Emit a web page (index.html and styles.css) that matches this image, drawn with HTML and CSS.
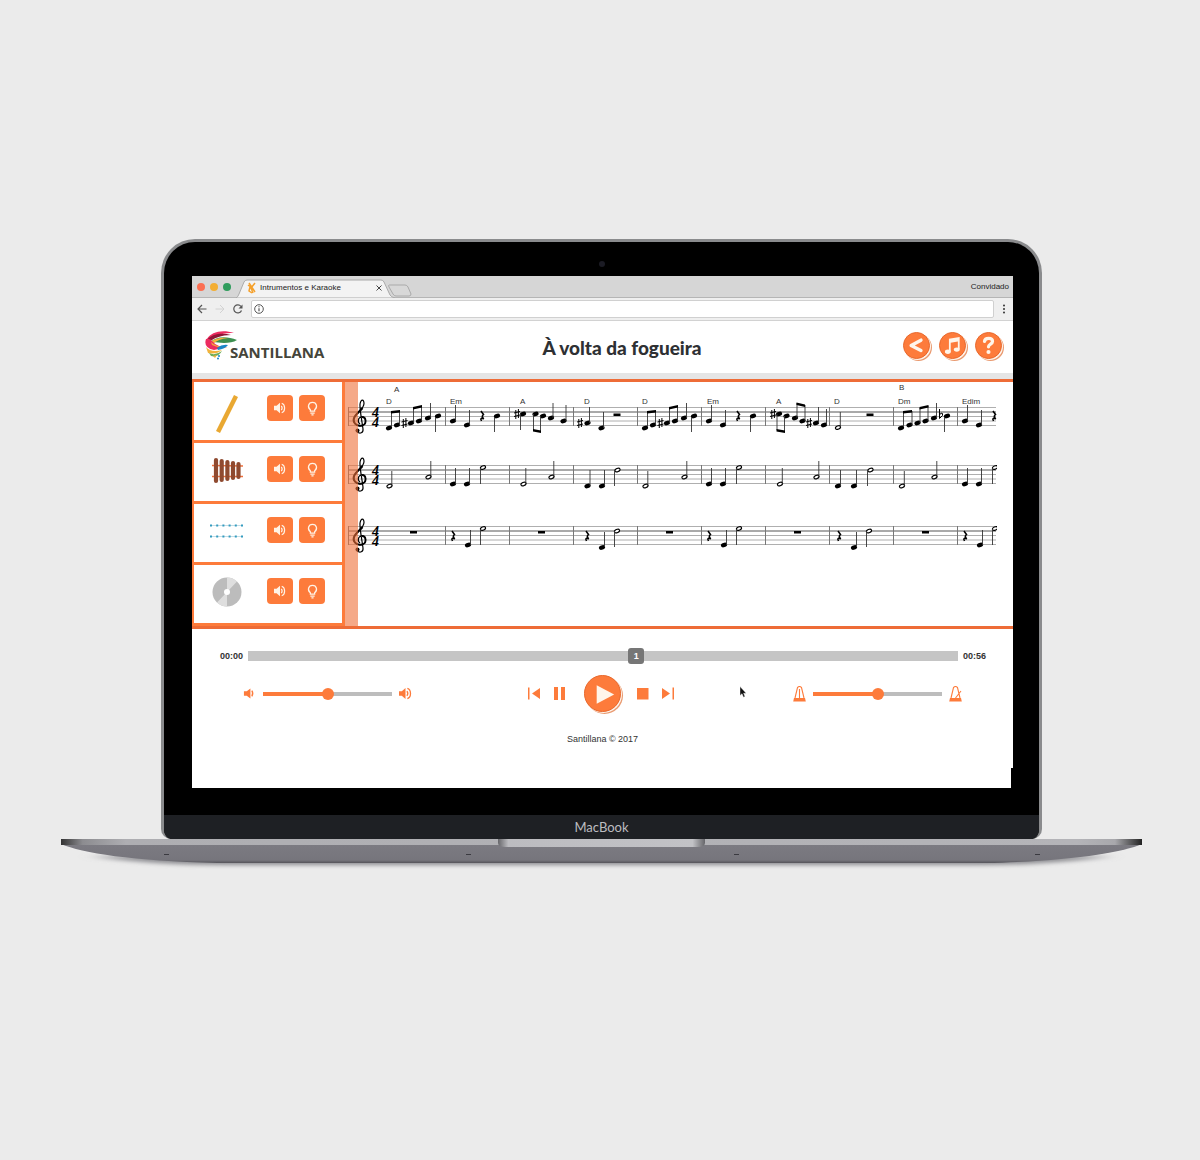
FILE: index.html
```html
<!DOCTYPE html>
<html lang="pt">
<head>
<meta charset="utf-8">
<title>Intrumentos e Karaoke</title>
<link rel="stylesheet" href="styles.css">
</head>
<body>
<svg class="defs" width="0" height="0" aria-hidden="true">
  <defs>
    <symbol id="speaker" viewBox="0 0 14 14">
      <path d="M0 4.500h3L7 1v12L3 9.500H0z"/>
      <path d="M8.500 4.500q2 2.500 0 5M9 1.500c4.500 1.500 4.500 9.500 0 11" fill="none" stroke="currentColor" stroke-width="1.400"/>
    </symbol>
    <symbol id="speaker-low" viewBox="0 0 14 14">
      <path d="M1 4.500h3L8 1.500v11L4 9.500H1z"/>
      <path d="M9.500 4q2 3 0 6" fill="none" stroke="currentColor" stroke-width="1.400"/>
    </symbol>
    <symbol id="bulb" viewBox="0 0 14 14">
      <path d="M5 9.500V8.200C2 6 3 1.200 7 1.200S12 6 9 8.200v1.300zM5 11.300h4M6 13h2" fill="none" stroke="currentColor" stroke-width="1.200"/>
    </symbol>
  </defs>
</svg>

<main class="stage">
  <div class="laptop">
    <div class="lid">
      <span class="camera"></span>
      <div class="screen">
        <div class="tabs">
          <span class="dot red"></span><span class="dot yellow"></span><span class="dot green"></span>
          <div class="tab">
            <svg class="tab-shape" viewBox="0 0 176 20" preserveAspectRatio="none" aria-hidden="true">
              <path d="M0 20Q2 19 3 16L8 4Q9 2 11 2H145Q147 2 148 4L154 17Q155 19 159 20z" fill="#f3f3f3" stroke="#aaa"/>
              <path d="M153 7h16q2 0 3 2l3 7q0 2-2 2h-13q-2 0-3-2l-4-7q-1-2 0-2z" fill="#d8d8d8" stroke="#aaa"/>
            </svg>
            <svg class="favicon" viewBox="0 0 10 12" aria-hidden="true"><path d="M2 1l6 9M8 1L4 6l2 5M3 5l-1 4 3 2M1 3l4 3" fill="none" stroke="#f5a12c" stroke-width="1.500"/></svg>
            <span class="tab-name">Intrumentos e Karaoke</span>
            <button class="plain close" aria-label="Fechar"><svg viewBox="0 0 6 6" width="6" height="6"><path d="M.5.5l5 5m0-5l-5 5" stroke="#444"/></svg></button>
          </div>
          <span class="guest">Convidado</span>
        </div>
        <div class="toolbar">
          <button class="plain" aria-label="Voltar"><svg viewBox="0 0 10 10" width="10" height="10"><path d="M9.500 5H1M5 1L1 5l4 4" fill="none" stroke="#555" stroke-width="1.200"/></svg></button>
          <button class="plain" aria-label="Avançar"><svg viewBox="0 0 10 10" width="10" height="10"><path d="M.5 5H9M5 1l4 4-4 4" fill="none" stroke="#d2d2d2"/></svg></button>
          <button class="plain" aria-label="Recarregar"><svg viewBox="0 0 10 10" width="10" height="10"><path d="M8.500 6.500A4 4 0 1 1 8 2.500" fill="none" stroke="#555" stroke-width="1.200"/><path d="M9.500.5v4h-4z" fill="#555"/></svg></button>
          <div class="address">
            <svg viewBox="0 0 10 10" width="10" height="10" aria-hidden="true"><circle cx="5" cy="5" r="4.300" fill="none" stroke="#555"/><path d="M5 4.300v3M5 2.300v1" stroke="#555" stroke-width="1.200"/></svg>
            <input type="text" aria-label="Endereço">
          </div>
          <button class="plain" aria-label="Menu"><svg viewBox="0 0 4 10" width="4" height="10"><circle cx="2" cy="1.500" r="1"/><circle cx="2" cy="5" r="1"/><circle cx="2" cy="8.500" r="1"/></svg></button>
        </div>

        <header class="header">
          <a class="logo" href="#">
            <svg viewBox="0 0 34 30" width="34" height="30" aria-hidden="true">
              <path d="M2 9C6 2 17-1 29 3 20 3 10 4 2 11z" fill="#ec2b5f"/>
              <path d="M2 10C8 3 18 3 26 5 17 5 8 8 3 13z" fill="#8d1735"/>
              <path d="M5 12C12 6 22 6 32 10 26 14 15 13 8 12z" fill="#3d8f50"/>
              <path d="M3 13Q12 7 23 8 13 9 8 14z" fill="#f2b33d"/>
              <path d="M1 9Q-2 18 9 20l13-3Q12 17 8 12 5 8 1 9z" fill="#ec2b5f"/>
              <path d="M6 12q6 6 17 5-8 2-16-2z" fill="#f2a33d"/>
              <path d="M12 18q5-4 11-3-3 4-10 5z" fill="#1a86c8"/>
              <path d="M1 17q5 6 16 3-6 5-14 3z" fill="#f2b33d"/>
              <path d="M4 23q6 3 13-2-4 7-11 5z" fill="#6fae5a"/>
              <path d="M8 26l4-1-2 3z" fill="#f2b33d"/>
              <circle cx="14" cy="26" r="1" fill="#1a86c8"/><circle cx="13" cy="28.500" r="1" fill="#1a86c8"/>
            </svg>
            <span class="brand">SANTILLANA</span>
          </a>
          <h1 class="title">À volta da fogueira</h1>
          <nav class="actions">
            <button class="round" aria-label="Anterior"><svg viewBox="0 0 28 28"><path d="M19 8L8 14l11 5.500" fill="none" stroke="currentColor" stroke-width="3.800" stroke-linecap="round" stroke-linejoin="round"/></svg></button>
            <button class="round" aria-label="Música"><svg viewBox="0 0 28 28"><path d="M10 6.500L22 4.500V18h-2V9.500l-8 1.400V21h-2z"/><ellipse cx="8.800" cy="21" rx="3.300" ry="2.400"/><ellipse cx="18.800" cy="18.500" rx="3.300" ry="2.400"/></svg></button>
            <button class="round" aria-label="Ajuda"><svg viewBox="0 0 28 28"><path d="M9.500 9.500C10 5 18.500 5 18.500 9.500c0 3-4.500 3-4.500 6" fill="none" stroke="currentColor" stroke-width="3.600" stroke-linecap="round"/><circle cx="14" cy="21.300" r="2.300"/></svg></button>
          </nav>
        </header>

        <section class="workspace">
          <div class="instruments">
            <div class="instrument">
              <svg viewBox="0 0 46 58" width="46" height="58" aria-hidden="true"><path d="M14 50L32 14" stroke="#e9a832" stroke-width="4.500"/></svg>
              <div class="pair">
                <button class="square" aria-label="Som da flauta"><svg><use href="#speaker"/></svg></button>
                <button class="square hint" aria-label="Dica da flauta"><svg><use href="#bulb"/></svg></button>
              </div>
            </div>
            <div class="instrument">
              <svg viewBox="0 0 46 58" width="46" height="58" aria-hidden="true"><path d="M8 22.500l31 .5M8 33.500h31" stroke="#f0703c" stroke-width="1.500"/><path d="M12 17v21M17.700 18v19M23.400 19v17M29 20v15M34.500 21v13" stroke="#8f4a30" stroke-width="4.200" stroke-linecap="round"/></svg>
              <div class="pair">
                <button class="square" aria-label="Som do xilofone"><svg><use href="#speaker"/></svg></button>
                <button class="square hint" aria-label="Dica do xilofone"><svg><use href="#bulb"/></svg></button>
              </div>
            </div>
            <div class="instrument">
              <svg viewBox="0 0 46 58" width="46" height="58" aria-hidden="true"><path d="M6 21.500h33M6 32.500h33" stroke="#c3dde5"/><path d="M6 21.500h33M6 32.500h33" stroke="#359cc0" stroke-width="2" stroke-dasharray="2 4.200"/></svg>
              <div class="pair">
                <button class="square" aria-label="Som do metalofone"><svg><use href="#speaker"/></svg></button>
                <button class="square hint" aria-label="Dica do metalofone"><svg><use href="#bulb"/></svg></button>
              </div>
            </div>
            <div class="instrument">
              <svg viewBox="0 0 46 58" width="46" height="58" aria-hidden="true"><circle cx="23" cy="27" r="14.500" fill="#bcbcbc"/><path d="M23 27V12.500a14.500 14.500 0 0 1 10 4zM23 27v14.500a14.500 14.500 0 0 1-10-4z" fill="#dedede"/><circle cx="23" cy="27" r="3" fill="#fff"/></svg>
              <div class="pair">
                <button class="square" aria-label="Som do acompanhamento"><svg><use href="#speaker"/></svg></button>
                <button class="square hint" aria-label="Dica do acompanhamento"><svg><use href="#bulb"/></svg></button>
              </div>
            </div>
          </div>

          <svg class="score" viewBox="345 382 668 244" preserveAspectRatio="xMinYMin meet" role="img" aria-label="Partitura">
            <defs>
              <ellipse id="q" rx="3.200" ry="2.200" transform="rotate(-20)"/>
              <ellipse id="h" rx="2.700" ry="1.700" transform="rotate(-25)" fill="#fff" stroke="#000" stroke-width="1.100"/>
              <path id="sharp" d="M-1.200-4v9M1.400-5v9M-3-1l6-1.500M-3 2.500l6-1.500" fill="none" stroke="#000" stroke-width="1"/>
              <path id="rest" d="M-1-5L1.500-1.500Q-1 .5 1.800 3M1.800 3Q-2.500 1-.5 5" fill="none" stroke="#000" stroke-width="1.600"/>
              <rect id="bar-rest" x="-3.500" y="-1" width="7" height="2.500"/>
              <g id="clef">
                <path d="M-1 3C-4 1-3-4 1-4 5.500-4 6 3.500 1 4.500-5 6-9 1-6.500-4-4-9 3-12 3-17.500 3-22 0-22-1-17-1.500-12 1 0 2 8 2.500 12-1 13-4 11" fill="none" stroke="#000" stroke-width="1.200"/>
                <path d="M1 4.500C-5 6-9 1-6.500-4-4.500-7.500-1-10 1.500-13" fill="none" stroke="#000" stroke-width="2"/>
                <path d="M1-4C5.500-4 6 3.500 1 4.500" fill="none" stroke="#000" stroke-width="1.800"/>
                <circle cx="-3.500" cy="9.500" r="2"/>
              </g>
              <g id="start">
                <path d="M348.500 407v19" stroke="#777"/>
                <use href="#clef" x="361" y="421"/>
                <text x="372" y="417" class="meter">4</text><text x="372" y="427" class="meter">4</text>
              </g>
              <g id="staff">
                <path d="M348 407.500h648M348 416.500h648M348 421h648M348 425.500h648" stroke="#9a9a9a" stroke-width=".8"/>
                <path d="M348 412h648" stroke="#555" stroke-width="1"/>
                <path d="M445.500 407v19M509.500 407v19M573.500 407v19M637.500 407v19M701.500 407v19M765.500 407v19M829.500 407v19M893.500 407v19M957.500 407v19" stroke="#777"/>
              </g>
              <g id="melody">
                <use href="#q" x="389" y="428"/><use href="#q" x="397" y="425"/><use href="#q" x="411" y="423"/><use href="#q" x="419" y="421"/><use href="#q" x="428" y="418"/><use href="#q" x="438" y="416"/>
                <path d="M391.500 427v-15M399.500 425v-14M413.500 423v-15M421.500 421v-15M430.500 418v-15M435.500 417v15" stroke="#333" stroke-width=".9"/>
                <path d="M391 411l9-1v2.500l-9 1zM413 407l9-2v2.500l-9 2z"/>
              </g>
              <g id="melody2">
                <use href="#q" x="453" y="421"/><use href="#q" x="467" y="425"/><use href="#rest" x="482" y="416"/><use href="#q" x="497" y="416"/>
                <path d="M455.500 421v-16M469.500 425v-15M494.500 417v15" stroke="#333" stroke-width=".9"/>
              </g>
              <g id="pair-high">
                <use href="#q" x="453" y="484"/><use href="#q" x="467" y="484"/><use href="#h" x="483" y="467.500"/>
                <path d="M455.500 484v-16M469.500 484v-16M480.500 468v16" stroke="#333" stroke-width=".9"/>
              </g>
              <g id="pair-low">
                <use href="#q" x="587.500" y="486"/><use href="#q" x="602" y="486"/><use href="#h" x="617.500" y="470"/>
                <path d="M590 486v-16M604.500 486v-16M614.500 470v16" stroke="#333" stroke-width=".9"/>
              </g>
              <g id="halves-low">
                <use href="#h" x="389.500" y="486"/><use href="#h" x="428.500" y="477"/>
                <path d="M391.800 486v-15M430.800 477v-16" stroke="#333" stroke-width=".9"/>
              </g>
              <g id="triple-high">
                <use href="#rest" x="453" y="536"/><use href="#q" x="468" y="545"/><use href="#h" x="483" y="528.500"/>
                <path d="M470.500 545v-15M480.500 529v16" stroke="#333" stroke-width=".9"/>
              </g>
              <g id="triple-low">
                <use href="#rest" x="587" y="536"/><use href="#q" x="602" y="547.500"/><use href="#h" x="617" y="531"/>
                <path d="M604.500 547v-15M614.500 531v16" stroke="#333" stroke-width=".9"/>
              </g>
              <clipPath id="page-edge"><rect x="345" y="382" width="652" height="244"/></clipPath>
            </defs>

            <g class="chords">
              <text x="394" y="392">A</text><text x="386" y="404">D</text><text x="450" y="404">Em</text><text x="520" y="404">A</text><text x="584" y="404">D</text>
              <text x="642" y="404">D</text><text x="707" y="404">Em</text><text x="776" y="404">A</text><text x="834" y="404">D</text><text x="899" y="390">B</text><text x="898" y="404">Dm</text><text x="962" y="404">Edim</text>
            </g>

            <g clip-path="url(#page-edge)">
              <use href="#staff"/><use href="#staff" y="58"/><use href="#staff" y="119"/>
              <use href="#start"/><use href="#start" y="58"/><use href="#start" y="119"/>

              <use href="#melody"/><use href="#sharp" x="404.500" y="423"/>
              <use href="#melody2"/>
              <use href="#sharp" x="517" y="414"/><use href="#q" x="523" y="414"/><use href="#q" x="535.500" y="414"/><use href="#q" x="543" y="416"/><use href="#q" x="551" y="418"/><use href="#q" x="563.500" y="421"/>
              <path d="M520.500 414v16M533.500 414v16M540.500 416v16M553 418v-15M566 421v-16" stroke="#333" stroke-width=".9"/>
              <path d="M533 429l8 1.500v2.500l-8-1.500z"/>
              <use href="#sharp" x="580" y="423"/><use href="#q" x="587.500" y="423"/><use href="#q" x="601.500" y="428"/>
              <path d="M589.500 423v-16M603.500 428v-16" stroke="#333" stroke-width=".9"/>
              <use href="#bar-rest" x="617" y="414.500"/>
              <use href="#melody" x="256"/><use href="#sharp" x="660.500" y="423"/><use href="#melody2" x="256"/>
              <use href="#sharp" x="773" y="414"/><use href="#q" x="779" y="414"/><use href="#q" x="786.500" y="416"/><use href="#q" x="795" y="418"/><use href="#q" x="802.500" y="421"/><use href="#sharp" x="809" y="423"/><use href="#q" x="816" y="423"/><use href="#q" x="824" y="425"/>
              <path d="M777 414v16M784.500 416v15M797 418v-15M805 421v-16M818.500 423v-16M826.500 425v-16" stroke="#333" stroke-width=".9"/>
              <path d="M776.500 429l8.500 1.500v2.500l-8.500-1.500zM796.500 402.500l8.500 2v2.500l-8.500-2z"/>
              <use href="#h" x="838" y="427.500"/><path d="M840.300 427v-15" stroke="#333" stroke-width=".9"/><use href="#bar-rest" x="870" y="414.500"/>
              <use href="#q" x="901" y="428"/><use href="#q" x="909.500" y="425"/><use href="#q" x="917.500" y="423"/><use href="#q" x="925.500" y="421"/><use href="#q" x="934" y="418"/><use href="#q" x="947" y="416"/>
              <path d="M903.500 427v-15M912 425v-14M920 423v-15M928 421v-15M936.500 418v-15M944.500 417v15" stroke="#333" stroke-width=".9"/>
              <path d="M903 411l9-1v2.500l-9 1zM919.500 407l9-2v2.500l-9 2z"/>
              <path d="M939.500 409v9.500q4.500-3.500 3-5t-3 1.500" fill="none" stroke="#000" stroke-width="1"/>
              <use href="#melody2" x="512"/>

              <use href="#halves-low"/><use href="#pair-high"/>
              <use href="#h" x="523.500" y="484"/><use href="#h" x="551.500" y="477"/><path d="M525.800 484v-16M553.800 477v-16" stroke="#333" stroke-width=".9"/>
              <use href="#pair-low"/><use href="#halves-low" x="256"/><use href="#pair-high" x="256"/>
              <use href="#h" x="780" y="484"/><use href="#h" x="816.500" y="477"/><path d="M782.300 484v-16M818.800 477v-16" stroke="#333" stroke-width=".9"/>
              <use href="#q" x="838" y="486"/><use href="#q" x="854" y="486"/><use href="#h" x="870.500" y="470"/><path d="M840.500 486v-16M856.500 486v-16M867.500 470v16" stroke="#333" stroke-width=".9"/>
              <use href="#h" x="902" y="486"/><use href="#h" x="934.500" y="477"/><path d="M904.300 486v-15M936.800 477v-16" stroke="#333" stroke-width=".9"/>
              <use href="#pair-high" x="512"/>

              <use href="#bar-rest" x="413.500" y="532"/><use href="#triple-high"/><use href="#bar-rest" x="541.500" y="532"/><use href="#triple-low"/>
              <use href="#bar-rest" x="669.500" y="532"/><use href="#triple-high" x="256"/><use href="#bar-rest" x="797.500" y="532"/><use href="#triple-low" x="252"/>
              <use href="#bar-rest" x="925.500" y="532"/><use href="#triple-high" x="512"/>
            </g>
            <rect x="345" y="382" width="13" height="244" fill="#ee7038" opacity=".6"/>
          </svg>
        </section>

        <section class="player">
          <div class="timeline">
            <span>00:00</span>
            <div class="track">
              <input class="seek" type="range" min="0" max="1000" value="548" aria-label="Posição">
              <span class="marker">1</span>
            </div>
            <span>00:56</span>
          </div>
          <div class="controls">
            <div class="level">
              <svg class="mini"><use href="#speaker-low"/></svg>
              <input class="slider" type="range" value="50" aria-label="Volume">
              <svg class="mini"><use href="#speaker"/></svg>
            </div>
            <div class="transport">
              <button class="plain" aria-label="Início"><svg viewBox="0 0 13 13" width="13" height="13"><path d="M1 .5h1.500v12H1zM13 1v11L5 6.500z"/></svg></button>
              <button class="plain" aria-label="Pausa"><svg viewBox="0 0 13 13" width="13" height="13"><path d="M1 0h4v13H1zM8 0h4v13H8z"/></svg></button>
              <button class="play" aria-label="Tocar"><svg viewBox="0 0 36 36"><path d="M12 9.500L30 19 12 28.500z"/></svg></button>
              <button class="plain" aria-label="Parar"><svg viewBox="0 0 13 13" width="13" height="13"><path d="M1 1h11.500v11.500H1z"/></svg></button>
              <button class="plain" aria-label="Fim"><svg viewBox="0 0 13 13" width="13" height="13"><path d="M10.500.5H12v12h-1.500zM0 1v11l8-5.500z"/></svg></button>
            </div>
            <div class="level">
              <svg class="metro" viewBox="0 0 13 16"><path d="M2 12L4.500 1.500Q6.500-.5 8.500 1.500L11 12M6.500 3v9" fill="none" stroke="currentColor" stroke-width="1.100"/><path d="M1 12h11l.8 3.500H.2z"/></svg>
              <input class="slider" type="range" value="50" aria-label="Andamento">
              <svg class="metro" viewBox="0 0 13 16"><path d="M2 12L4.500 1.500Q6.500-.5 8.500 1.500L11 12M6.500 12L12 5" fill="none" stroke="currentColor" stroke-width="1.100"/><path d="M1 12h11l.8 3.500H.2z"/></svg>
            </div>
          </div>
          <svg class="pointer" viewBox="0 0 8 12" width="8" height="12" aria-hidden="true"><path d="M1 .5v9l2-1.800 1.500 3.500 1.500-.7L4.600 7.200h2.600z" stroke="#fff" stroke-width=".4"/></svg>
          <footer class="footer">Santillana © 2017</footer>
        </section>
      </div>
      <div class="chin">MacBook</div>
    </div>
    <svg class="base" viewBox="0 0 1081 40" preserveAspectRatio="none" aria-hidden="true">
      <defs>
        <linearGradient id="edge"><stop offset="0" stop-color="#333"/><stop offset=".02" stop-color="#8c8c90"/><stop offset=".06" stop-color="#aeaeb2"/><stop offset=".94" stop-color="#b4b4b8"/><stop offset=".975" stop-color="#a8a8ac"/><stop offset="1" stop-color="#222"/></linearGradient>
        <linearGradient id="notch"><stop offset="0" stop-color="#66666a"/><stop offset=".05" stop-color="#bcbcc0"/><stop offset=".94" stop-color="#c2c2c6"/><stop offset="1" stop-color="#66666a"/></linearGradient>
        <linearGradient id="belly" x2="0" y2="1"><stop offset="0" stop-color="#7c7b82"/><stop offset=".85" stop-color="#76757c"/><stop offset="1" stop-color="#55545a"/></linearGradient>
        <filter id="soft" x="-10%" y="-50%" width="120%" height="200%"><feGaussianBlur stdDeviation="8 2"/></filter>
      </defs>
      <path d="M30 17H1051Q990 26 920 26H160Q90 26 30 17z" fill="#8b8b90" filter="url(#soft)"/>
      <path d="M0 5H1081C1060 14 1010 22 925 24H156C71 22 21 14 0 5z" fill="url(#belly)"/>
      <path d="M0 0H1081V6H0z" fill="url(#edge)"/>
      <path d="M437 0H644V4Q644 8 636 8H445Q437 8 437 4z" fill="url(#notch)"/>
      <path d="M103 15.500h5M405 15.500h5M673 15.500h5M974 15.500h5" stroke="#3a3a40"/>
    </svg>
  </div>
</main>
</body>
</html>
```
FILE: styles.css
```css
* { box-sizing: border-box; }
body { margin: 0; background: #ebebeb; color: #333; font: 9px/12px "Liberation Sans", Arial, sans-serif; }
.defs { position: absolute; }
svg { display: block; fill: currentColor; flex: none; }
button { padding: 0; border: 0; background: none; color: inherit; cursor: pointer; }
input { margin: 0; }

.stage { min-height: 100vh; padding: 239px 58px 0 61px; }
.lid {
  position: relative; margin: 0 100px; padding: 34px 26px 0 28px; overflow: hidden;
  background: #000; border: 3px solid #8a8b8d; border-bottom: 0; border-radius: 34px 34px 10px 10px;
}
.camera { position: absolute; top: 19px; left: 50%; width: 6px; height: 6px; margin-left: -3px; border-radius: 50%; background: #1b1b24; }
.chin { margin: 27px -26px 0 -28px; background: #1e2024; color: #bcbcc0; font: 13px/24px Lato, sans-serif; text-align: center; }
.base { width: 100%; height: 40px; overflow: visible; }

.screen { overflow: hidden; }
.screen::after { content: ""; display: block; height: 20px; margin-right: 2px; background: #fff; }

.tabs { display: flex; align-items: center; height: 22px; padding: 0 4px 0 5px; background: #d6d6d6; border-bottom: 1px solid #b5b5b5; font-size: 8px; color: #222; }
.dot { width: 8px; height: 8px; margin-right: 5px; border-radius: 50%; }
.red { background: #fb6f52; }
.yellow { background: #f3ae33; }
.green { background: #2f9c5c; }
.tab { position: relative; display: flex; align-items: center; width: 176px; height: 22px; padding: 2px 30px 0 11px; }
.tab-shape { position: absolute; left: 0; top: 2px; width: 176px; height: 20px; }
.favicon { position: relative; width: 10px; height: 12px; margin-right: 3px; }
.tab-name { position: relative; flex: 1; white-space: nowrap; }
.close { position: relative; }
.guest { margin-left: auto; font-size: 8px; }

.toolbar { display: flex; align-items: center; gap: 8px; height: 23px; padding: 0 7px 0 5px; background: #efefef; border-bottom: 1px solid #d2d2d2; }
.address { display: flex; flex: 1; align-items: center; height: 18px; padding: 0 2px; background: #fff; border: 1px solid #d0d0d0; border-radius: 2px; }
.address input { flex: 1; min-width: 0; height: 14px; border: 0; outline: 0; }

.header { display: flex; align-items: center; justify-content: space-between; height: 58px; padding: 0 11px 4px 13px; background: #fff; border-bottom: 6px solid #e5e5e5; }
.logo { display: flex; align-items: flex-end; width: 158px; color: #45453a; text-decoration: none; }
.brand { margin-left: -9px; font: bold 15px/16px "Open Sans", sans-serif; }
.title { margin: 0; padding-top: 6px; color: #2e3033; font: 900 19px/24px Lato, sans-serif; }
.actions { display: flex; width: 121px; justify-content: flex-end; gap: 9px; }
.round, .play { width: 27px; height: 27px; border-radius: 50%; background: #fd7b3b; border: 1px solid #e8682c; box-shadow: 1px 1px 0 0 #fff3ea, 2px 2px 0 0 #e99a70; color: #fff5ea; }
.round svg, .play svg { width: 100%; height: 100%; }

.workspace { display: flex; background: #fff; border: 3px solid #ee6c37; border-width: 3px 0; }
.instruments { flex: none; width: 153px; border: 3px solid #fd7b3b; border-width: 0 3px 0 2px; }
.instrument { display: flex; justify-content: space-between; padding: 0 17px 0 10px; border-bottom: 3px solid #fd7b3b; }
.pair { display: flex; gap: 6px; padding-top: 13px; }
.square { display: grid; place-items: center; width: 26px; height: 26px; border-radius: 4px; background: #fd7b3b; color: #fff3e6; }
.square svg { width: 12px; height: 12px; }
.hint svg { width: 15px; height: 15px; }
.score { flex: 1; min-width: 0; height: 244px; fill: #000; }
.chords { font: 8px "Liberation Sans", Arial, sans-serif; fill: #333; }
.meter { font: italic bold 14px "Liberation Serif", serif; }

.player { position: relative; padding: 19px 0 23px; background: #fff; }
.timeline { display: flex; align-items: center; gap: 5px; padding: 0 27px 0 28px; font-weight: bold; line-height: 16px; }
.track { position: relative; flex: 1; height: 16px; }
.seek, .slider { display: block; appearance: none; background: transparent; }
.seek { width: 100%; height: 16px; }
.seek::-webkit-slider-runnable-track { height: 10px; background: #c5c5c5; }
.seek::-webkit-slider-thumb { appearance: none; width: 16px; height: 16px; margin-top: -3px; border-radius: 3px; background: #767676; }
.marker { position: absolute; top: 0; left: calc(8px + (100% - 16px) * .548); width: 16px; margin-left: -8px; color: #fff; text-align: center; pointer-events: none; }
.controls { display: flex; align-items: center; justify-content: space-between; padding: 11px 51px 0 51px; color: #fd7b3b; }
.level { display: flex; align-items: center; gap: 7px; }
.mini { width: 13px; height: 13px; }
.metro { width: 13px; height: 16px; }
.slider { width: 129px; height: 12px; }
.slider::-webkit-slider-runnable-track { height: 4px; background: linear-gradient(90deg, #fd7b3b 50%, #bdbdbd 50%); }
.slider::-webkit-slider-thumb { appearance: none; width: 12px; height: 12px; margin-top: -4px; border-radius: 50%; background: #fd7b3b; }
.transport { display: flex; align-items: center; gap: 13px; padding-right: 3px; }
.play { width: 37px; height: 37px; margin: 0 2px 0 5px; }
.pointer { position: absolute; left: 66.600%; top: 57px; fill: #111; }
.footer { padding-top: 21px; text-align: center; font-size: 9px; }
```
